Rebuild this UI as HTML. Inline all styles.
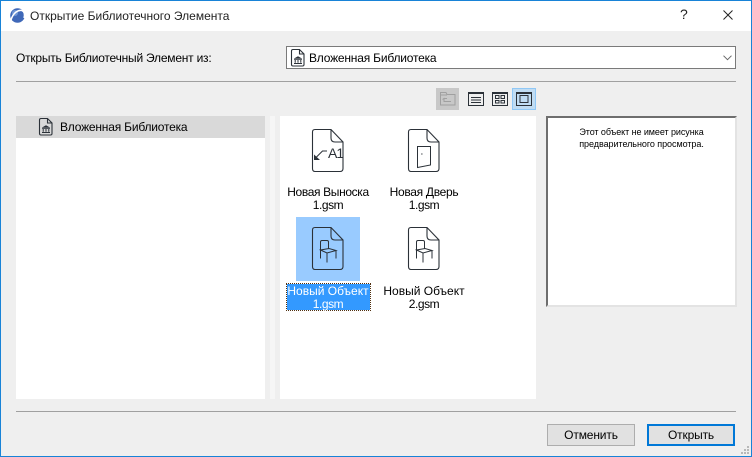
<!DOCTYPE html>
<html><head><meta charset="utf-8"><style>
html,body{margin:0;padding:0;background:#efefef}
#w{position:relative;width:752px;height:457px;overflow:hidden;background:#efefef;font-family:"Liberation Sans",sans-serif;font-size:12px;color:#000}
.a{position:absolute}
.t{position:absolute;white-space:nowrap;line-height:14px}
.c{text-align:center}
svg{position:absolute;overflow:visible}
.ic{fill:none;stroke:#2b3138;stroke-width:1.1}
.g{letter-spacing:-.45px}
</style></head><body><div id="w">
<div class="a" style="left:0;top:0;width:752px;height:31px;background:#fff"></div>
<div class="a" style="left:0;top:0;width:752px;height:1px;background:#1883d7"></div>
<div class="a" style="left:0;top:456px;width:752px;height:1px;background:#1883d7"></div>
<div class="a" style="left:0;top:0;width:1px;height:457px;background:#1883d7"></div>
<div class="a" style="left:751px;top:0;width:1px;height:457px;background:#1883d7"></div>

<svg style="left:10px;top:8px" width="16" height="16" viewBox="0 0 16 16"><circle cx="7.500" cy="7.500" r="7.300" fill="#3f68b8"/><circle cx="5" cy="5" r="3" fill="#8fb4e8" opacity=".6"/><path d="M1 12C3 5 8 1.500 12 2.500C14.500 3.500 15 7 14 10" fill="none" stroke="#fff" stroke-width="1.500"/></svg>
<div class="t" style="left:30px;top:9px;color:#222;letter-spacing:0">Открытие Библиотечного Элемента</div>
<div class="t" style="left:680px;top:7px;font-size:14px;color:#222">?</div>
<svg style="left:723px;top:10px" width="10" height="10" viewBox="0 0 10 10"><path d="M.5 .5L9.500 9.500M9.500 .5L.5 9.500" stroke="#222" stroke-width="1" fill="none"/></svg>

<div class="t" style="left:16px;top:51px;letter-spacing:-.22px">Открыть Библиотечный Элемент из:</div>
<div class="a" style="left:286px;top:46px;width:448px;height:21px;background:#fff;border:1px solid #7a7a7a"></div>
<svg style="left:291px;top:49px" width="14" height="18" viewBox="0 0 14 18"><path class="ic" d="M2 .5H8.500L13 5V15.500Q13 17 11.500 17H2Q.5 17 .5 15.500V2Q.5 .5 2 .5ZM8.500 .5V5H13"/><path d="M3 9.500L7 7.300L11 9.500Z" fill="#2b3138"/><path d="M3 10.300H11M4.200 11V13.800M7 11V13.800M9.800 11V13.800M3 14.500H11" stroke="#2b3138" fill="none" stroke-width="1"/></svg>
<div class="t" style="left:309px;top:51px;letter-spacing:-.2px">Вложенная Библиотека</div>
<svg style="left:723px;top:55px" width="9" height="6" viewBox="0 0 9 6"><path d="M.5 .7L4.500 4.700L8.500 .7" fill="none" stroke="#666"/></svg>

<div class="a" style="left:16px;top:81px;width:720px;height:1px;background:#a0a0a0"></div>

<div class="a" style="left:436px;top:88px;width:23px;height:22px;background:#c8c8c8"></div>
<svg style="left:440px;top:92px" width="16" height="14" viewBox="0 0 16 14"><path d="M.5 13V.5H6L7 2.500H15V13ZM.5 3H7M4 6.500H7M4 6.500V9.500H11M4.500 6L2.500 7.500" fill="none" stroke="#a0a0a0"/></svg>
<svg style="left:468px;top:92px" width="16" height="14" viewBox="0 0 16 14"><path d="M.5 .5H15.500V13.500H.5ZM3 5.500H13M3 8H13M3 10.500H13" fill="none" stroke="#2b3138"/><path d="M.5 1.500H15.500" stroke="#2b3138"/></svg>
<svg style="left:492px;top:92px" width="16" height="14" viewBox="0 0 16 14"><path d="M.5 .5H15.500V13.500H.5ZM3.500 3.500H7V6.500H3.500ZM9 3.500H12.500V6.500H9ZM3.500 8.500H7V11H3.500ZM9 8.500H12.500V11H9Z" fill="none" stroke="#2b3138"/><path d="M.5 1.500H15.500" stroke="#2b3138"/></svg>
<div class="a" style="left:512px;top:88px;width:22px;height:20px;background:#c0dcf3;border:1px solid #90c8f6"></div>
<svg style="left:516px;top:92px" width="16" height="14" viewBox="0 0 16 14"><path d="M.5 .5H15.500V13.500H.5ZM4 3.500H12V10.500H4Z" fill="none" stroke="#2b3138"/><path d="M.5 1.500H15.500" stroke="#2b3138"/></svg>

<div class="a" style="left:16px;top:116px;width:249px;height:283px;background:#fff"></div>
<div class="a" style="left:16px;top:116px;width:249px;height:22px;background:#d9d9d9"></div>
<div class="a" style="left:270px;top:116px;width:5px;height:283px;background:#f6f6f6"></div>
<svg style="left:39px;top:118px" width="14" height="18" viewBox="0 0 14 18"><path class="ic" d="M2 .5H8.500L13 5V15.500Q13 17 11.500 17H2Q.5 17 .5 15.500V2Q.5 .5 2 .5ZM8.500 .5V5H13"/><path d="M3 9.500L7 7.300L11 9.500Z" fill="#2b3138"/><path d="M3 10.300H11M4.200 11V13.800M7 11V13.800M9.800 11V13.800M3 14.500H11" stroke="#2b3138" fill="none" stroke-width="1"/></svg>
<div class="t" style="left:60px;top:120px;letter-spacing:-.2px">Вложенная Библиотека</div>

<div class="a" style="left:280px;top:116px;width:256px;height:283px;background:#fff"></div>

<svg style="left:312px;top:129px" width="32" height="43" viewBox="0 0 32 43"><path class="ic" d="M3 .5H19L31 13V39.500Q31 42.500 28 42.500H3Q.5 42.500 .5 39.500V3Q.5 .5 3 .5ZM19 .5V9Q19 13 23 13H31"/><path d="M15 22H10.500L3 29.500" fill="none" stroke="#2b3138"/><path d="M2 25.500V31H8Z" fill="#2b3138"/><text x="16" y="29" font-family="Liberation Sans" font-size="14" letter-spacing="-1" fill="#2b3138">A1</text></svg>
<div class="t c" style="left:282px;top:185px;width:92px;letter-spacing:-.36px">Новая Выноска</div>
<div class="t c g" style="left:282px;top:198px;width:92px">1.gsm</div>

<svg style="left:408px;top:129px" width="32" height="43" viewBox="0 0 32 43"><path class="ic" d="M3 .5H19L31 13V39.500Q31 42.500 28 42.500H3Q.5 42.500 .5 39.500V3Q.5 .5 3 .5ZM19 .5V9Q19 13 23 13H31"/><path d="M9.500 17.500H22.500V36L9.500 38.500ZM13.200 25H14.500" fill="none" stroke="#2b3138"/></svg>
<div class="t c" style="left:378px;top:185px;width:92px;letter-spacing:-.3px">Новая Дверь</div>
<div class="t c g" style="left:378px;top:198px;width:92px">1.gsm</div>

<div class="a" style="left:296px;top:217px;width:64px;height:64px;background:#99cbff"></div>
<svg style="left:312px;top:227px" width="32" height="43" viewBox="0 0 32 43"><path class="ic" d="M3 .5H19L31 13V39.500Q31 42.500 28 42.500H3Q.5 42.500 .5 39.500V3Q.5 .5 3 .5ZM19 .5V9Q19 13 23 13H31"/><path d="M8.500 22.500V15Q8.500 13.500 10 13.500H15Q16.500 13.500 16.500 15V22M8.500 23L15 26L24 23.500L17 21.500ZM8.500 23V31.500M15 26V35.500M24 23.500V31.500" fill="none" stroke="#2b3138"/></svg>
<div class="a" style="left:286.500px;top:283.500px;width:83px;height:26px;background:#3399ff;outline:1px dotted #503010;outline-offset:0"></div>
<div class="t c" style="left:286px;top:284px;width:84px;color:#fff;letter-spacing:0">Новый Объект</div>
<div class="t c g" style="left:286px;top:297px;width:84px;color:#fff">1.gsm</div>

<svg style="left:408px;top:227px" width="32" height="43" viewBox="0 0 32 43"><path class="ic" d="M3 .5H19L31 13V39.500Q31 42.500 28 42.500H3Q.5 42.500 .5 39.500V3Q.5 .5 3 .5ZM19 .5V9Q19 13 23 13H31"/><path d="M8.500 22.500V15Q8.500 13.500 10 13.500H15Q16.500 13.500 16.500 15V22M8.500 23L15 26L24 23.500L17 21.500ZM8.500 23V31.500M15 26V35.500M24 23.500V31.500" fill="none" stroke="#2b3138"/></svg>
<div class="t c" style="left:378px;top:284px;width:92px;letter-spacing:0">Новый Объект</div>
<div class="t c g" style="left:378px;top:297px;width:92px">2.gsm</div>

<div class="a" style="left:546px;top:116px;width:187px;height:187px;background:#fff;border-left:2px solid #6e6e6e;border-top:2px solid #6e6e6e;border-right:2px solid #e3e3e3;border-bottom:2px solid #e3e3e3"></div>
<div class="t c" style="left:548px;top:126px;width:187px;font-size:9px;line-height:12px;letter-spacing:-.07px">Этот объект не имеет рисунка</div>
<div class="t c" style="left:548px;top:138px;width:187px;font-size:9px;line-height:12px;letter-spacing:-.05px">предварительного просмотра.</div>

<div class="a" style="left:16px;top:411px;width:720px;height:1px;background:#a0a0a0"></div>
<div class="a" style="left:547px;top:424px;width:86px;height:20px;background:#e1e1e1;border:1px solid #adadad"></div>
<div class="t c" style="left:547px;top:428px;width:88px;letter-spacing:-.15px">Отменить</div>
<div class="a" style="left:647px;top:424px;width:84px;height:18px;background:#e1e1e1;border:2px solid #0078d7"></div>
<div class="t c" style="left:647px;top:428px;width:88px;letter-spacing:-.15px">Открыть</div>
<svg style="left:740px;top:445px" width="10" height="10" viewBox="0 0 10 10"><path d="M7 1h2v2H7zM4 4h2v2H4zM7 4h2v2H7zM1 7h2v2H1zM4 7h2v2H4zM7 7h2v2H7z" fill="#b8b8b8"/></svg>
</div></body></html>
